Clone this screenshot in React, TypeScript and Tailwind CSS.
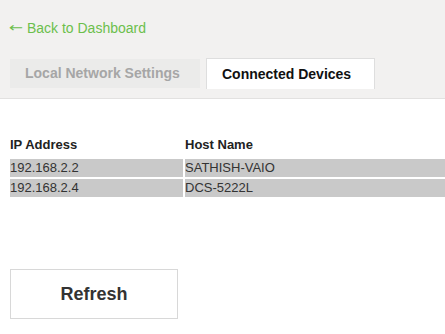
const devices = [
  { ip: '192.168.2.2', host: 'SATHISH-VAIO' },
  { ip: '192.168.2.4', host: 'DCS-5222L' },
];

export default function App() {
  return (
    <div className="min-h-[334px] bg-white font-['Liberation_Sans',Arial,sans-serif] text-[#333]">
      <div className="bg-[#f2f1f0] border-b border-[#e2e1e0] pl-[9px] pt-[20px] pb-[10px]">
        <a href="#" className="flex items-center text-[14px] leading-[16px] text-[#6cbf4c]">
          <span className="font-['DejaVu_Sans',sans-serif] text-[13px] scale-x-[1.3] origin-left">←</span>
          <span className="ml-[7px]">Back to Dashboard</span>
        </a>
        <div className="flex items-end gap-[6px] mt-[22px] ml-[1px]">
          <div className="h-[29px] w-[190px] bg-[#ebebea] text-[14px] font-bold text-[#a6a6a6] leading-[29px] pl-[15px]">
            Local Network Settings
          </div>
          <div className="h-[31px] w-[169px] bg-white border border-b-0 border-[#dedede] text-[14px] font-bold text-[#111] leading-[31px] pl-[15px] mb-[-1px]">
            Connected Devices
          </div>
        </div>
      </div>

      <table className="mt-[35px] ml-[8px] w-[calc(100%-6px)] border-separate border-spacing-[2px] text-[13px]">
        <thead>
          <tr>
            <th className="w-[173px] h-[21px] p-0 text-left align-top leading-[17px] font-bold text-[#222]">
              IP Address
            </th>
            <th className="h-[21px] p-0 text-left align-top leading-[17px] font-bold text-[#222]">
              Host Name
            </th>
          </tr>
        </thead>
        <tbody>
          {devices.map(d => (
            <tr key={d.ip}>
              <td className="h-[18px] p-0 leading-[18px] bg-[#c9c9c9]">{d.ip}</td>
              <td className="h-[18px] p-0 leading-[18px] bg-[#c9c9c9]">{d.host}</td>
            </tr>
          ))}
        </tbody>
      </table>

      <button className="mt-[70px] ml-[10px] w-[168px] h-[50px] border border-[#d8d8d8] bg-white text-[18px] font-bold text-[#333]">
        Refresh
      </button>
    </div>
  );
}
